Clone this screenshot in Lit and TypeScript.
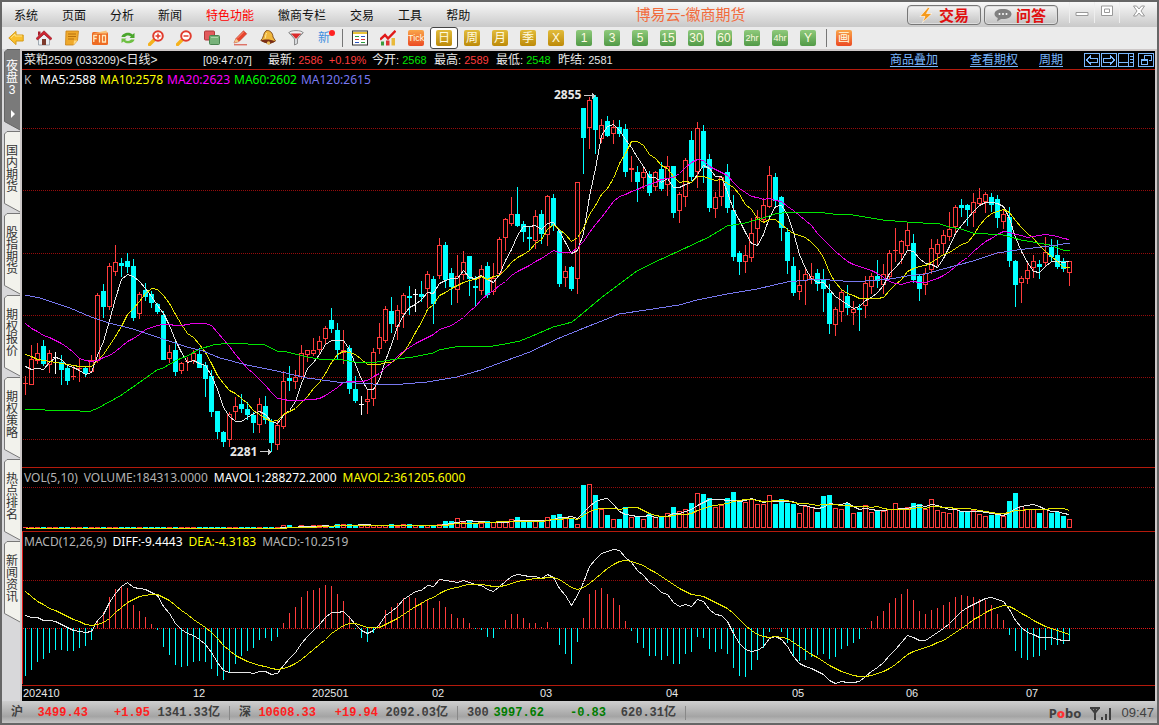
import { LitElement, html, svg, css, nothing } from "lit";
import { customElement, property, state } from "lit/decorators.js";
import { classMap } from "lit/directives/class-map.js";

/* One daily bar: kind (r = up, c = down, w = flat), high, body top, body bottom, low, volume.
   Rows are measured on the plotting grid, downwards. */
type Bar = [string, number, number, number, number, number];

const CANDLES = `
r376,383,384,395 r345,359,385,385 r343,353,361,364 c340,346,364,366 r350,353,365,373 w352,357,357,374
c355,362,370,385 c364,368,381,385 r365,376,377,380 r358,368,368,382 c366,368,374,377 r355,360,372,373
r293,295,361,363 c284,291,307,318 r263,266,307,310 r245,262,272,276 c258,263,266,277 c253,261,267,273
c259,266,318,321 r292,294,314,319 c283,290,297,301 c291,294,303,308 c303,304,312,314 c311,315,360,360
r345,352,359,363 c342,350,372,376 r362,363,371,374 r357,361,362,371 r350,353,361,364 c348,354,368,368
c362,365,379,397 c370,376,412,417 c411,411,432,439 c431,432,442,447 r412,414,440,447 r397,406,412,420
c394,404,409,413 c402,409,415,420 c412,415,423,433 r398,404,425,433 c396,406,420,424 c419,421,443,452
r421,425,445,450 r371,381,427,429 c366,378,381,391 r370,377,382,389 r345,353,377,379 r350,350,355,362
r338,350,354,356 r336,341,350,355 r326,328,339,344 c308,320,329,333 c323,330,350,359 r330,350,353,364
c345,348,389,394 c376,389,401,403 w396,404,404,415 r389,399,402,414 r348,352,399,406 r323,337,349,354
r306,309,341,343 c297,311,324,333 r305,310,327,340 r293,295,314,328 c286,296,298,315 w289,294,294,312
c281,294,297,302 r271,274,289,308 c276,279,304,324 r238,245,276,279 c242,245,280,288 c268,273,287,305
r255,276,290,303 r251,262,275,280 c256,256,279,296 c276,286,288,307 r265,269,291,295 c262,266,295,298
r263,278,292,295 r237,239,274,275 r218,219,238,251 r197,214,224,226 c187,214,226,227 c221,224,232,242
c226,237,239,250 r210,216,241,249 c210,214,234,244 r195,196,235,246 c194,198,226,231 c230,231,284,287
r266,271,278,287 c266,267,289,291 r182,182,279,294 c108,108,138,174 r97,100,128,149 c95,97,130,154
r119,125,139,143 c116,121,136,137 r120,127,134,144 c120,127,134,137 c124,129,172,177 r156,168,170,182
c166,172,182,202 r168,172,178,189 c171,174,193,196 r171,172,187,191 c162,169,189,191 r156,166,185,196
c166,166,213,218 r192,194,211,223 r158,160,197,207 c131,140,177,181 r122,128,172,188 c125,131,168,183
c154,159,208,212 r192,197,209,218 r177,177,197,206 c164,172,208,213 c195,210,257,261 c251,253,262,275
r245,255,262,273 r218,233,258,262 r210,217,229,246 r198,205,220,223 r166,175,207,208 c173,177,201,206
c196,197,228,241 c228,232,261,274 c257,266,293,296 r270,285,292,300 r269,274,281,305 r263,276,279,284
c269,273,284,291 c269,279,289,312 c284,293,324,334 r307,309,325,336 r289,292,312,322 c285,296,308,315
r301,309,313,325 c304,308,310,331 r276,283,306,318 r273,276,287,294 c260,276,281,288 r264,274,285,294
r250,253,277,280 r228,250,251,262 r240,241,254,264 r223,230,246,251 c234,243,280,283 c275,276,289,301
r268,273,285,295 r239,248,270,274 r239,244,254,266 r230,235,244,254 r212,229,237,241 r205,207,227,233
c199,205,208,217 c204,205,210,226 r193,202,213,227 r188,198,204,206 r192,194,202,213 c193,197,205,212
c195,199,218,228 r210,214,222,229 c207,217,261,267 c260,261,285,307 r276,278,283,303 r263,270,279,284
r255,261,268,278 c260,264,267,279 r237,252,263,266 c239,247,257,262 c240,255,267,269 c258,261,269,272
r261,261,273,286`;

const VOLUMES = `
0 0 0 0 0 0 0 0 0 0 0 0 0 0 0 0 0 0 0 0 0 0 0 0 0 0 0 0 0 0 0 0 0 0 0 0 0 0 0 0 0 0 0
3 3 1 3 1 3 3 3 2 4 4 4 3 3 4 3 3 3 4 2 4 4 3 2 3 2 4 7 7 10 6 8 5 5 7 6 6 6 9 11 8 6 8 8 11 13 14 11 10 4
43 44 33 19 13 9 9 21 11 12 9 14 11 12 15 21 17 19 25 35 34 30 21 23 30 36 27 26 29 24 24 33 24 29 25 24
15 22 21 16 32 33 20 19 25 15 16 23 16 18 17 19 25 19 21 25 24 19 29 18 16 15 19 17 17 18 14 12 13 14 12
27 35 22 19 19 15 19 15 16 12 9`;

/* MACD histogram, in thirds of a row above the zero line. */
const HISTOGRAM = `
-145 -125 -101 -92 -74 -65 -65 -68 -68 -59 -53 -35 24 48 94 118 124 121 70 52 34 13 -5 -56 -80 -110 -116 -113
-101 -98 -101 -122 -143 -155 -132 -107 -83 -68 -59 -35 -29 -38 -26 16 46 64 94 110 115 121 130 127 103 82 37
-2 -29 -41 -14 16 55 64 76 91 94 91 79 85 61 82 64 43 31 31 16 -2 -5 -26 -29 -2 25 43 43 31 16 16 4 19 0 -50
-77 -107 -41 31 103 115 121 103 91 70 22 -8 -44 -59 -83 -83 -95 -83 -107 -107 -77 -71 -26 -29 -62 -71 -62 -77
-119 -143 -146 -125 -95 -59 -11 0 -11 -44 -86 -98 -95 -86 -80 -77 -92 -86 -62 -53 -44 -32 -2 22 37 52 76 91
103 118 85 52 43 55 61 70 79 94 100 97 94 88 85 70 43 25 -20 -68 -89 -95 -86 -83 -65 -50 -50 -47 -38`;

/* Known DEA levels (bar index, thirds of a row above zero); the running sum is re-based on them. */
const DEA_LEVELS: [number, number][] = [
  [0, 111], [11, 9], [21, 102], [30, 3], [43, -120], [55, 14], [59, 4], [70, 113], [76, 132], [79, 126], [88, 152],
  [93, 122], [100, 203], [107, 145], [112, 99], [117, 60], [123, -25], [127, -31], [134, -110], [140, -144],
  [148, -68], [154, -25], [163, 68], [168, 24], [174, -18],
];

const numbers = (s: string) => s.trim().split(/\s+/).map(Number);

const volumes = numbers(VOLUMES);
const bars: Bar[] = CANDLES.trim().split(/\s+/).map((t, i) => {
  const [h, a, b, l] = t.slice(1).split(",").map(Number);
  return [t[0], h, a, b, l, Math.max(1, volumes[i])];
});
const histogram = numbers(HISTOGRAM);

const MA60 =
  "25,409 45,410 60,410 80,411 91,411 98,408 109,402 120,396 133,387 157,370 163,368 177,360 187,356 200,349 213,345 230,343 265,345 277,351 287,352 307,357 319,359 343,360 361,363 377,362 397,359 413,357 433,353 439,350 460,346 480,346 487,347 505,344 520,341 537,334 553,327 565,324 572,322 577,318 601,298 637,271 655,262 679,251 709,237 727,226 745,223 763,218 775,214 790,212 817,212 833,214 853,215 883,220 907,222 923,223 937,223 949,227 961,229 973,233 1003,235 1021,240 1050,245 1063,250 1070,251";
const MA120 =
  "25,295 40,298 70,308 91,317 109,323 133,329 157,337 187,347 203,351 220,358 247,365 277,371 307,378 337,382 373,384 403,384 427,382 457,377 481,370 505,361 530,352 557,339 589,326 607,319 619,314 653,309 679,305 697,300 727,294 757,289 787,282 817,279 843,281 865,281 890,279 907,276 925,274 943,269 973,261 997,253 1017,250 1057,245 1070,243";

const STEP = 6;
const xOf = (i: number) => 25.5 + i * STEP;

/* Moving average over n values; the head covers the days before the window is full. */
function average(values: number[], n: number, head: number[]) {
  return values.map((_, i) =>
    i < n - 1 ? head[Math.min(i, head.length - 1)] : values.slice(i - n + 1, i + 1).reduce((a, b) => a + b, 0) / n
  );
}
const path = (rows: number[]) => rows.map((y, i) => `${xOf(i)},${Math.round(y) + 0.5}`).join(" ");

const closes = bars.map(([k, , a, b]) => (k === "c" ? b : a));
const ma5 = average(closes, 5, [366, 369, 368, 369]);
const ma10 = average(closes, 10, [354, 356, 359, 360, 361, 362, 363, 364, 365]);
const ma20 = average(closes, 20, [323, 328, 331, 335, 337, 340, 343, 347, 352, 358, 360, 361, 360, 357, 355, 351, 346, 341, 338]);
const mavol1 = average(volumes, 5, [0]);
const mavol2 = average(volumes, 10, [0]);

const running: number[] = [];
histogram.forEach((h, i) => running.push(i === 0 ? 37 : running[i - 1] + h / 24));
const dea = running.map((value, i) => {
  const next = Math.max(1, DEA_LEVELS.findIndex(([at]) => at >= i));
  const [i0, v0] = DEA_LEVELS[next - 1];
  const [i1, v1] = DEA_LEVELS[next];
  const e0 = v0 / 3 - running[i0];
  const e1 = v1 / 3 - running[i1];
  return value + e0 + ((e1 - e0) * (i - i0)) / (i1 - i0);
});
const diff = histogram.map((h, i) => dea[i] + h / 6);

const ICONS: Record<string, unknown> = {
  back: svg`<path d="M.8 8 8 1.4V5h7.2v6H8v3.6Z" fill="#f9bf2d" stroke="#d59a17" stroke-width="1"/><path d="M3 7.8 7 4v2h7" fill="none" stroke="#ffe48a"/>`,
  home: svg`<path d="M2.5 8.5V15h11V8.500L8 4Z" fill="#e9eef2" stroke="#8f9aa3" stroke-width=".8"/><path d="M0 8.500 8 .8l8 7.700-1.500 1.500L8 4.200l-6.500 5.800Z" fill="#cf2330" stroke="#8b1620" stroke-width=".6"/><path d="M2 1.500h2.500V4L2 6Z" fill="#a71c28"/><path d="M6 9h4v6H6Z" fill="#7b3a2c"/>`,
  scroll: svg`<path d="M2 1h12.500l-1 9.500L9.500 15H1.500Z" fill="#efa92c" stroke="#c88116" stroke-width=".8"/><path d="M4 4h8M4 6.500h8M4 9h6" stroke="#b8700e"/><path d="M9.500 15l.5-4.500h3.500Z" fill="#ffd980"/>`,
  f10: svg`<rect x="0" y="2" width="16" height="13" rx="1.500" fill="#ee6b22"/><path d="M1 3.500 14.500.5l.5 3Z" fill="#f8c27a"/><path d="M1.800 12V5.500h3.400M1.800 8.500h2.900M7.500 5v7.500M10.500 5.500h3v6.500h-3Z" fill="none" stroke="#ffe9bd" stroke-width="1.300"/>`,
  refresh: svg`<path d="M1.500 7C2 3.500 9 1 12.500 4.500L14.500 3v5H9.500l1.500-1.500C8.500 4.800 6 5.500 5 7Z" fill="#4aa62c"/><path d="M14.500 9.500c-.5 3.500-7.500 5.500-11 2L1.500 13V8.500h5L5 10c2.500 1.500 5 1 6-.5Z" fill="#6fc043"/>`,
  zoomin: svg`<path d="M1.500 14.500 6.500 9.500" stroke="#f5b21c" stroke-width="3.400" stroke-linecap="round"/><circle cx="10" cy="6" r="4.800" fill="#fff" stroke="#e13c2e" stroke-width="2"/><path d="M7.500 6h5M10 3.500v5" stroke="#e13c2e" stroke-width="1.500"/>`,
  zoomout: svg`<path d="M1.500 14.500 6.500 9.500" stroke="#f5b21c" stroke-width="3.400" stroke-linecap="round"/><circle cx="10" cy="6" r="4.800" fill="#fff" stroke="#e13c2e" stroke-width="2"/><path d="M7.500 6h5" stroke="#e13c2e" stroke-width="1.500"/>`,
  overlay: svg`<rect x=".5" y="1" width="10" height="9" rx="1" fill="#e25a5c" stroke="#b03a3c"/><rect x="5.500" y="5.500" width="10" height="9" rx="1" fill="#77b27a" stroke="#498350"/><path d="M7 7.500h7" stroke="#a9d4a8"/>`,
  pencil: svg`<path d="M2 14.800h13" stroke="#d8402f"/><path d="M2 13 4 8.500 11.500.8l3.200 3L7 11.500Z" fill="#e8432c" stroke="#b52b1a" stroke-width=".6"/><path d="M2 13 4 8.500 7 11.500Z" fill="#f3c98d"/><path d="m5 8.500 7-7" stroke="#ff9b7f"/>`,
  bell: svg`<path d="M6 .8C9.500-.5 13 3 13 7l2.500 4-6.500 3L.8 10.500C4 8 3 3 6 .8Z" fill="#f0b73c" stroke="#7b4413" stroke-width=".9"/><path d="M1 10.500c3-1.500 10-1.500 14 1-3 2.500-11 2.500-14-1Z" fill="#7a2d16"/><circle cx="8.500" cy="13" r="1.700" fill="#e9c05c"/><path d="M6.500 3c-1 1.500-.5 4-1.500 5.500" stroke="#ffe9a0" fill="none"/>`,
  funnel: svg`<path d="M1 2.500 6.500 9v6l3-1.500V9L15 2.500Z" fill="#d7dadd" stroke="#777" stroke-width=".8"/><ellipse cx="8" cy="2.800" rx="7" ry="2.200" fill="#eee" stroke="#777" stroke-width=".8"/><path d="M3 3.500h10L8.500 8.500h-1Z" fill="#db2b2b"/>`,
  list: svg`<rect x=".5" y="1" width="15" height="14" fill="#fff" stroke="#333"/><path d="M1 3h14" stroke="#e8c33a" stroke-width="2"/><path d="M3 6.500h4M9 12.500h4" stroke="#2c9c3c" stroke-width="1.200"/><path d="M9 6.500h4M3 12.500h4" stroke="#2b56c0" stroke-width="1.200"/><path d="M3 9.500h4M9 9.500h4" stroke="#d33" stroke-width="1.200"/>`,
  trend: svg`<path d="M1 15.500v-4h3v4Z" fill="#3c9c3c"/><path d="M6 15.500v-5h3.500v5Z" fill="#d33"/><path d="M11.500 15.500V8H15v7.500Z" fill="#e9b93a"/><path d="m0 9.500 5-4.500L8 8.500 15.500.8" fill="none" stroke="#e01919" stroke-width="2.400"/>`,
};

type Tool = { id: string; label?: string; tone?: string };
const TOOLS: Tool[][] = [
  [
    ...["back", "home", "scroll", "f10", "refresh", "zoomin", "zoomout", "overlay", "pencil", "bell", "funnel"].map((id) => ({ id })),
    { id: "new", label: "新", tone: "fresh" },
  ],
  [
    { id: "list" },
    { id: "trend" },
    { id: "tick", label: "Tick", tone: "orange" },
    ...["日", "周", "月", "季", "X"].map((label) => ({ id: label, label, tone: "gold" })),
    ...["1", "3", "5", "15", "30", "60", "2hr", "4hr", "Y"].map((label) => ({ id: label, label, tone: "green" })),
  ],
  [{ id: "draw", label: "画", tone: "orange" }],
];

@customElement("tool-strip")
class ToolStrip extends LitElement {
  @state() private period = "日";

  static styles = css`
    :host { display: flex; height: 22px; background: #ebebeb; }
    button { width: 28px; height: 22px; padding: 0; border: 1px solid transparent; border-radius: 3px; background: none; display: flex; align-items: center; justify-content: center; }
    button.on { background: #fff; border-color: #444; }
    svg { width: 16px; height: 16px; }
    .sep { width: 8px; display: flex; justify-content: center; }
    .sep::before { content: ""; width: 1px; height: 18px; margin-top: 2px; background: #777; }
    .badge { width: 16px; height: 16px; border-radius: 2px; font: 12px/16px "Liberation Sans", "Noto Sans CJK SC", sans-serif; color: #fffbe0; text-align: center; white-space: nowrap; }
    .long { font-size: 9px; }
    .gold { background: linear-gradient(#e2bc3c, #bd8a08); }
    .green { background: linear-gradient(#8fca7c, #519a46); }
    .orange { background: linear-gradient(#f9a64a, #ec4a22); }
    .fresh { position: relative; color: #3f8fe0; }
    .fresh::after { content: ""; position: absolute; right: -3px; top: 0; width: 6px; height: 6px; border-radius: 50%; background: #f22; }
  `;

  render() {
    return TOOLS.map(
      (group, g) => html`${g ? html`<span class="sep"></span>` : nothing}
        ${group.map(
          (t) => html`<button class=${classMap({ on: t.id === this.period })} aria-label=${t.label ?? t.id}
            @click=${() => t.tone === "gold" && (this.period = t.id)}>
            ${t.label
              ? html`<span class="badge ${t.tone} ${t.label.length > 2 ? "long" : ""}">${t.label}</span>`
              : html`<svg viewBox="0 0 16 16">${ICONS[t.id]}</svg>`}
          </button>`
        )}`
    );
  }
}

@customElement("side-tab")
class SideTab extends LitElement {
  @property() label = "";
  @property({ type: Boolean }) active = false;

  static styles = css`
    :host { display: block; height: 82px; }
    button { width: 16px; height: 82px; padding: 0; border: 0; background: none; display: grid; font: 12px/12px "Liberation Sans", "Noto Sans CJK SC", sans-serif; color: #333; }
    svg, .text { grid-area: 1 / 1; }
    svg { width: 16px; height: 82px; fill: #f2f2ec; stroke: #777; }
    .text { width: 12px; height: 76px; margin-left: 2px; display: flex; flex-direction: column; align-items: center; justify-content: center; }
    .active svg { fill: #7a7a7a; stroke: #666; }
    .active .text { color: #fff; height: 58px; }
    .active svg .arrow { fill: #fff; stroke: none; }
  `;

  render() {
    return html`<button class=${classMap({ active: this.active })}>
      <svg viewBox="0 0 16 82"><path d="M17 .5H3L.5 3v69.500L17 81.500"/>
        ${this.active ? svg`<path class="arrow" d="M7 61v8l4-4Z"/>` : nothing}</svg>
      <span class="text">${[...this.label].map((c) => html`<span>${c}</span>`)}</span>
    </button>`;
  }
}

@customElement("k-chart")
class KChart extends LitElement {
  static styles = css`
    :host { display: flex; flex-direction: column; background: #000; color: #e8e8e8; min-width: 0; }
    .head { height: 18px; border-bottom: 1px solid #b41a0c; display: flex; align-items: center; font: 12px/18px "Liberation Sans", "Noto Sans CJK SC", sans-serif; white-space: nowrap; padding-left: 2px; overflow: hidden; }
    .n { font-size: 11px; }
    .name { width: 179px; }
    .clock { width: 65px; }
    .quote { width: 62px; }
    .quote.wide { width: 104px; }
    .up { color: #ff3c3c; }
    .down { color: #00e600; }
    .links { margin-left: auto; display: flex; align-items: center; }
    .links a { color: #7ab8ff; margin-right: 21px; text-underline-offset: 2px; }
    .links a:first-child { margin-right: 32px; }
    .nav { padding: 0; border: 0; background: none; width: 17px; height: 15px; }
    .nav:last-child { margin-left: 3px; }
    .nav svg { display: block; width: 16px; height: 15px; fill: none; stroke: #7ab8ff; shape-rendering: crispEdges; }
    .panel { display: grid; grid-template: minmax(0, 1fr) / minmax(0, 1fr); border-bottom: 1px solid #b41a0c; }
    .panel > * { grid-area: 1 / 1; }
    .price { flex: 1; min-height: 0; }
    .volume { height: 63px; }
    .macd { height: 153px; }
    .plot { width: 100%; height: 100%; shape-rendering: crispEdges; fill: none; stroke-width: 1; }
    .legend { display: flex; gap: 6px; padding-left: 2px; font: 12px/20px "Noto Sans", sans-serif; height: 20px; white-space: nowrap; z-index: 1; color: #b4b4b4; }
    .price .legend { gap: 4px; }
    .k { width: 12px; }
    .white { color: #fff; } .yellow { color: #ff0; } .magenta { color: #f0f; } .green { color: #0f0; } .blue { color: #7878f0; }
    .grid { stroke: #960c0c; stroke-dasharray: 1 1; }
    .zero { stroke: #e01818; stroke-dasharray: 1 1; }
    .edge { stroke: #e01818; }
    .r { stroke: #ff3c3c; } .c { stroke: #0ff; } .w { stroke: #fff; }
    .cf { fill: #0ff; } .rf { fill: #ff3c3c; }
    .l1 { stroke: #e6e6e6; } .l2 { stroke: #e6e600; } .l3 { stroke: #e600e6; } .l4 { stroke: #00e600; } .l5 { stroke: #7878f0; }
    .mark { font: bold 12px "Noto Sans", sans-serif; fill: #e8e8e8; stroke: none; }
    .arrow { stroke: #ccc; }
    .axis { height: 15px; width: 100%; display: block; font: 11px "Liberation Sans", sans-serif; fill: #e8e8e8; }
  `;

  private candle([k, h, a, b, l]: Bar, i: number) {
    const x = xOf(i);
    if (k === "c")
      return svg`<path class="c" d="M${x} ${h}V${l}"/><rect class="cf" x=${x - 2.5} y=${a} width="5" height=${Math.max(b - a, 1)}/>`;
    if (k === "w" || b - a < 2)
      return svg`<path class=${k} d="M${x} ${h}V${l}M${x - 2.5} ${a + 0.5}h5"/>`;
    return svg`<path class="r" d="M${x} ${h}V${a}M${x} ${b}V${l}M${x - 2} ${a + 0.5}h4V${b - 0.5}h-4Z"/>`;
  }

  private volume([k, , , , , v]: Bar, i: number) {
    const x = xOf(i);
    const top = 528 - v;
    return k === "c" || v < 3
      ? svg`<rect class=${k === "c" ? "cf" : "rf"} x=${x - 2.5} y=${top} width="5" height=${v}/>`
      : svg`<path class="r" d="M${x - 2} ${top + 0.5}h4V527.500h-4Z"/>`;
  }

  private gridLine = (y: number, cls = "grid") => svg`<line class=${cls} x1="1" x2="100%" y1=${y + 0.5} y2=${y + 0.5}/>`;

  private quote(label: string, value: string, tone = "", change = "") {
    return html`<span class="quote ${change ? "wide" : ""}">${label}<span class="n">: <span class=${tone}
      >${value}${change ? html`&nbsp; ${change}` : nothing}</span></span></span>`;
  }

  render() {
    return html`
      <div class="head">
        <span class="name">菜粕<span class="n">2509 (033209)</span>&lt;日线&gt;</span>
        <span class="clock n">[09:47:07]</span>
        ${this.quote("最新", "2586", "up", "+0.19%")}${this.quote("今开", "2568", "down")}
        ${this.quote("最高", "2589", "up")}${this.quote("最低", "2548", "down")}${this.quote("昨结", "2581")}
        <div class="links">
          <a href="#overlay">商品叠加</a><a href="#options">查看期权</a><a href="#period">周期</a>
          <button class="nav" aria-label="left"><svg><path d="M.5.5h15v13H.5ZM2.500 7l4-4v2h7v4h-7v2Z"/></svg></button>
          <button class="nav" aria-label="right"><svg><path d="M.5.5h15v13H.5ZM13.500 7l-4-4v2h-7v4h7v2Z"/></svg></button>
          <button class="nav" aria-label="split"><svg><path d="M.5.5h15v13H.5ZM.5 9.500h9M10.500.5v13M12 3.500h3M12 6.500h3M12 9.500h3"/></svg></button>
          <button class="nav" aria-label="restore"><svg><path d="M.5.5h15v13H.5ZM6.500 6V2.500h7v5h-3M3.500 6.500h6v5h-6ZM4 7.500h5"/></svg></button>
        </div>
      </div>

      <section class="panel price">
        <div class="legend"><span class="k">K</span><span class="white">MA5:2588</span><span class="yellow">MA10:2578</span
          ><span class="magenta">MA20:2623</span><span class="green">MA60:2602</span><span class="blue">MA120:2615</span></div>
        <svg class="plot">
          ${[58, 120, 183, 245, 307, 369].map((y) => this.gridLine(y))}
          <g transform="translate(-22 -70)">
            ${bars.map((b, i) => this.candle(b, i))}
            <polyline class="l1" points=${path(ma5)}/><polyline class="l2" points=${path(ma10)}/>
            <polyline class="l3" points=${path(ma20)}/><polyline class="l4" points=${MA60}/><polyline class="l5" points=${MA120}/>
            <text class="mark" x="554" y="99">2855</text><path class="arrow" d="M584 95.500h11M592.500 92.500v6M593.500 93.500v4M594.500 94.500v2"/>
            <text class="mark" x="230" y="456">2281</text><path class="arrow" d="M260 451.500h11M268.500 448.500v6M269.500 449.500v4M270.500 450.500v2"/>
          </g>
        </svg>
      </section>

      <section class="panel volume">
        <div class="legend"><span>VOL(5,10)</span><span>VOLUME:184313.0000</span><span class="white">MAVOL1:288272.2000</span
          ><span class="yellow">MAVOL2:361205.6000</span></div>
        <svg class="plot">
          ${this.gridLine(19)}
          <g transform="translate(-22 -468)">
            ${bars.map((b, i) => this.volume(b, i))}
            <polyline class="l1" points=${path(mavol1.map((v) => 528 - v))}/>
            <polyline class="l2" points=${path(mavol2.map((v) => 528 - v))}/>
          </g>
        </svg>
      </section>

      <section class="panel macd">
        <div class="legend"><span>MACD(12,26,9)</span><span class="white">DIFF:-9.4443</span><span class="yellow">DEA:-4.3183</span
          ><span>MACD:-10.2519</span></div>
        <svg class="plot">
          ${this.gridLine(48)}${this.gridLine(96, "zero")}
          <path class="edge" d="M.5 0V152"/>
          <g transform="translate(-22 -532)">
            ${histogram.map((h, i) => svg`<path class=${h > 0 ? "r" : "c"} d="M${xOf(i)} 628V${628 - Math.round(h / 3)}"/>`)}
            <polyline class="l1" points=${path(diff.map((v) => 628 - v))}/>
            <polyline class="l2" points=${path(dea.map((v) => 628 - v))}/>
          </g>
        </svg>
      </section>

      <svg class="axis">
        ${([["202410", 1], ["12", 171], ["202501", 290], ["02", 410], ["03", 518], ["04", 644], ["05", 770], ["06", 884], ["07", 1004]] as [string, number][])
          .map(([t, x]) => svg`<text x=${x} y="11">${t}</text>`)}
      </svg>`;
  }
}

const MENUS = ["系统", "页面", "分析", "新闻", "特色功能", "徽商专栏", "交易", "工具", "帮助"];
const TABS = ["夜盘3", "国内期货", "股指期货", "期权报价", "期权策略", "热点排名", "新闻资讯"];
const MARKETS = [
  { name: "沪", last: "3499.43", change: "+1.95", turnover: "1341.33亿", tone: "up" },
  { name: "深", last: "10608.33", change: "+19.94", turnover: "2092.03亿", tone: "up" },
  { name: "300", last: "3997.62", change: "-0.83", turnover: "620.31亿", tone: "down" },
];

@customElement("app-root")
class AppRoot extends LitElement {
  static styles = css`
    :host { display: flex; flex-direction: column; height: 100vh; box-sizing: border-box; border: 2px solid #666; background: #ddd; font: 12px/16px "Liberation Sans", "Noto Sans CJK SC", sans-serif; color: #111; overflow: hidden; }
    .bar { height: 25px; display: flex; align-items: center; background: linear-gradient(#f8f8f8, #c9c9c9); }
    .menu { display: flex; }
    .menu button { border: 0; background: none; padding: 2px 12px 0; height: 25px; font: inherit; color: inherit; white-space: nowrap; }
    .menu .hot { color: #f00; }
    .title { flex: 1; text-align: center; padding-right: 8px; font-size: 15px; line-height: 24px; color: #f26b3c; white-space: nowrap; }
    .right { display: flex; align-items: center; height: 25px; }
    .pill { width: 74px; height: 20px; padding: 0 2px 0 0; margin-right: 3px; border: 1px solid #777; border-radius: 4px; background: linear-gradient(#f4f4f4, #c2c2c2); box-shadow: inset 0 0 0 1px #ddd; display: flex; align-items: center; justify-content: center; gap: 4px; font: bold 15px/18px "Noto Sans CJK SC", sans-serif; color: #e01010; }
    .pill svg { width: 18px; height: 16px; }
    .win { border: 0; border-left: 1px solid #eee; background: none; padding: 0 0 4px; height: 21px; width: 25px; align-self: flex-start; display: flex; align-items: center; justify-content: center; }
    .win:nth-of-type(3) { margin-left: 8px; }
    .win:last-child { width: 38px; }
    .win svg { width: 14px; height: 12px; fill: #fff; stroke: #999; }
    .main { flex: 1; min-height: 0; display: flex; border: solid #cdc8c8; border-width: 2px 2px 0 0; }
    .tabs { width: 16px; padding-left: 2px; background: #d8d8da; border-right: 2px solid #cdc8c8; margin-top: -2px; overflow: hidden; flex: none; }
    k-chart { flex: 1; }
    .status { height: 22px; padding-top: 2px; box-sizing: border-box; display: flex; align-items: center; background: linear-gradient(#cfcfcf, #a4a4a4 70%, #c4c4c4); color: #404040; font: bold 12px/20px "Liberation Mono", "Noto Sans CJK SC", monospace; white-space: nowrap; }
    .market { display: flex; border-right: 1px solid #888; line-height: 14px; padding: 0 9px; }
    .pair { width: 77px; display: flex; justify-content: space-between; }
    .change { width: 62px; text-align: right; }
    .turn { width: 70px; text-align: right; }
    .up { color: #ff2020; }
    .down { color: #007c00; }
    .brand { margin-left: auto; font: bold 13px/20px "Noto Sans", sans-serif; }
    .brand b { color: #f33; }
    .signal { width: 22px; height: 14px; margin: 0 9px; stroke: #404040; fill: none; stroke-width: 2; }
    .time { font: 13px/20px "Liberation Sans", sans-serif; padding-right: 3px; }
  `;

  render() {
    return html`
      <header class="bar">
        <nav class="menu">${MENUS.map((m) => html`<button class=${classMap({ hot: m === "特色功能" })}>${m}</button>`)}</nav>
        <div class="title">博易云-徽商期货</div>
        <div class="right">
          <button class="pill"><svg viewBox="0 0 18 16"><path d="M11 .5 3 9.500h5L5.500 15.500 15 6.500H9.500L13 .5Z" fill="#f59a1c" stroke="#fff" stroke-width=".6"/></svg>交易</button>
          <button class="pill"><svg viewBox="0 0 18 16"><path d="M9 2c5 0 8.500 2 8.500 5S14 12 9 12c-1 0-1.500 0-2 0L3 14.500l.8-3.500C1.800 10 .5 8.700.5 7 .5 4 4 2 9 2Z" fill="#808080"/><g fill="#fff"><circle cx="5.500" cy="7" r="1"/><circle cx="9" cy="7" r="1"/><circle cx="12.500" cy="7" r="1"/></g></svg>问答</button>
          <button class="win" aria-label="minimize"><svg viewBox="0 0 14 12"><path d="M1 7.500h12v3H1Z"/></svg></button>
          <button class="win" aria-label="maximize"><svg viewBox="0 0 14 12"><path d="M1.500 1h11v9.500h-11ZM4.500 4h5v3.500h-5Z"/></svg></button>
          <button class="win" aria-label="close"><svg viewBox="0 0 14 12"><path d="M1.500 1h3L7 4l2.500-3h3L9 6l3.500 5h-3L7 8l-2.500 3h-3L5 6Z"/></svg></button>
        </div>
      </header>
      <tool-strip></tool-strip>
      <main class="main">
        <aside class="tabs">${TABS.map((t, i) => html`<side-tab label=${t} ?active=${i === 0}></side-tab>`)}</aside>
        <k-chart></k-chart>
      </main>
      <footer class="status">
        ${MARKETS.map(
          (m) => html`<span class="market"><span class="pair"><span>${m.name}</span><span class=${m.tone}>${m.last}</span></span
            ><span class="change ${m.tone}">${m.change}</span><span class="turn">${m.turnover}</span></span>`
        )}
        <span class="brand">P<b>o</b>bo</span>
        <svg class="signal" viewBox="0 0 22 14"><path d="M0 2h10M1 2l4 5 4-5M5 2v12"/><path d="M12 14v-3M16 14V8M20 14V2"/></svg>
        <time class="time">09:47</time>
      </footer>`;
  }
}
